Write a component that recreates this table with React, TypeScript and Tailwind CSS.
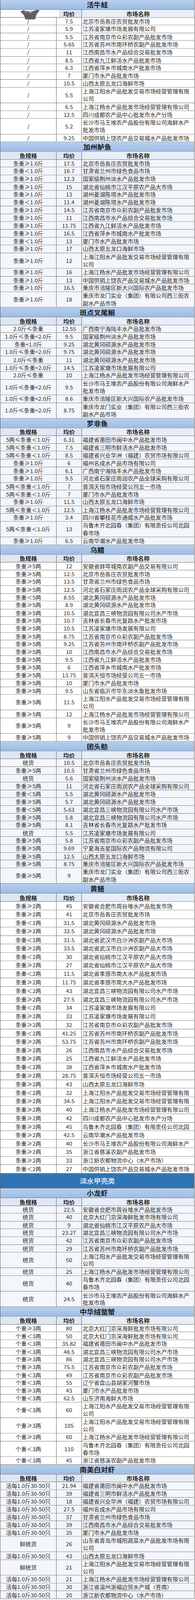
// Wholesale price tables for freshwater fish / crustaceans, one section per species.
import { useEffect, useState } from "react";

type R = [string, string, string];

type Section = {
  title: string;
  tint?: boolean;
  tall?: boolean;
  rows: R[];
};

const GE1 = "条重≥1.0斤";
const LT1 = "条重＜1.0斤";
const A = "1.0斤≤条重<2.0斤";
const B = "2.0斤≤条重";
const C = "条重<1.0斤";
const L5 = "5两≤条重＜1.0斤";
const GE5 = "条重≥5两";
const LT5 = "条重＜5两";
const GE2 = "条重≥2两";
const LT2 = "条重＜2两";
const TH = "统货";
const GE3 = "个重≥3两";
const LT3 = "个重＜3两";
const SH = "活每1.0斤30-50只";

const JY = "上海江阳水产品批发交易市场经营管理有限公司";
const JYS = "上海江杨水产品批发市场经营管理有限公司";
const CS = "长沙市马王堆农产品股份有限公司海鲜水产批发市场";
const SR = "中国供销上饶农产品交易城水产品批发市场";
const LM = "重庆市龙门实业（集团）有限公司西三街农副水产品市场";
const FL = "重庆市涪陵区新大兴国际农产品批发市场";
const WL = "乌鲁木齐北园春（集团）有限责任公司北园春市场";

const sectionsA: Section[] = [
  {
    title: "活牛蛙",
    rows: [
      ["/", "7.5", "北京市岳各庄农贸批发市场"],
      ["/", "5.9", "江苏凌家塘市场发展有限公司"],
      ["/", "5.5", "江苏省南京市众彩农副产品批发市场"],
      ["/", "5.65", "江苏省苏州市南环桥农副产品批发市场"],
      ["/", "11", "江西南昌市水产品综合交易批发市场"],
      ["/", "8.5", "江西省九江鲜活水产品批发市场"],
      ["/", "6.3", "江西省萍乡市城南水产批发市场"],
      ["/", "7", "厦门市水产品批发市场"],
      ["/", "10.5", "山西太原五龙口海鲜市场"],
      ["/", "5.5", JY],
      ["/", "6.5", JYS],
      ["/", "12.5", "四川成都农产品中心批发市水产分场"],
      ["/", "5.2", CS],
      ["/", "9.25", SR],
    ],
  },
  {
    title: "加州鲈鱼",
    tint: true,
    rows: [
      [GE1, "17.5", "北京市岳各庄农贸批发市场"],
      [LT1, "16.7", "甘肃省兰州市绿色食品市场"],
      [GE1, "12.3", "国家级荆州淡水产品批发市场"],
      [GE1, "15", "湖北省仙桃市江汉平原农产品大市场"],
      [GE1, "13", "湖州菱湖陈塔水产品批发市场"],
      [LT1, "11.4", "湖州菱湖陈塔水产品批发市场"],
      [GE1, "14.5", "江苏省南京市众彩农副产品批发市场"],
      [GE1, "11", "江西南昌市水产品综合交易批发市场"],
      [GE1, "11.75", "江西省九江鲜活水产品批发市场"],
      [GE1, "16.5", "江西省萍乡市城南水产批发市场"],
      [LT1, "13", "厦门市水产品批发市场"],
      [GE1, "17", "山西太原五龙口海鲜市场"],
      [GE1, "12", JY],
      [GE1, "16", JYS],
      [GE1, "13", SR],
      [GE1, "16.5", FL],
      [GE1, "18", LM],
    ],
  },
  {
    title: "斑点叉尾鮰",
    tint: true,
    rows: [
      [B, "12.55", "广西南宁海陆丰水产品批发市场"],
      [A, "9.5", "国家级荆州淡水产品批发市场"],
      [C, "9.25", "湖北黄冈硕源水产品批发市场"],
      [A, "9.75", "湖北黄冈硕源水产品批发市场"],
      [B, "11", "湖北黄冈硕源水产品批发市场"],
      [A, "14.5", "江苏凌家塘市场发展有限公司"],
      [B, "10", JYS],
      [A, "9.5", CS],
      [A, "8.6", FL],
      [A, "8.75", LM],
    ],
  },
  {
    title: "罗非鱼",
    tint: true,
    rows: [
      [L5, "6.31", "福建省莆田市闽中水产品批发市场"],
      [L5, "7.5", "福建省三明市鲜活水产品批发市场"],
      [L5, "8.5", "福建省兴业华洲（福建）农贸市场有限公司"],
      [GE1, "6", "福州名成水产品市场有限公司"],
      [GE1, "6.1", "广西南宁海陆丰水产品批发市场"],
      [GE1, "9.5", "河北省石家庄雨润农产品全球采购有限公司"],
      [L5, "7", "普洱天恒市场经营公司五一市场"],
      [L5, "7", "厦门市水产品批发市场"],
      [GE1, "11.5", "山西太原五龙口海鲜市场"],
      [L5, "12.5", JYS],
      [GE1, "3.4", "四川省攀枝花市通威水产品批发市场"],
      [L5, "13", WL],
      [GE1, "6.5", "云南华潮水产品批发市场"],
    ],
  },
  {
    title: "乌鳢",
    rows: [
      [GE5, "12", "安徽省蚌埠城南农副产品交易有限公司"],
      [GE5, "12.5", "北京市岳各庄农贸批发市场"],
      [GE5, "13.5", "甘肃省兰州市绿色食品市场"],
      [GE5, "12.5", "河北省石家庄雨润农产品全球采购有限公司"],
      [LT5, "8.55", "湖北黄冈硕源水产品批发市场"],
      [GE5, "8.9", "湖北黄冈硕源水产品批发市场"],
      [GE5, "10.5", "湖北宜昌三峡物流园有限公司水产市场"],
      [GE5, "10.7", "吉林省长春市光复路水产批发市场"],
      [GE5, "10.5", "江苏凌家塘市场发展有限公司"],
      [GE5, "8.75", "江苏省南京市众彩农副产品批发市场"],
      [GE5, "9.25", "江苏省苏州市南环桥农副产品批发市场"],
      [GE5, "10", "江西南昌市水产品综合交易批发市场"],
      [GE5, "9.5", "江西省九江鲜活水产品批发市场"],
      [GE5, "6", "江西省萍乡市城南水产批发市场"],
      [GE5, "13.75", "普洱天恒市场经营公司五一市场"],
      [GE5, "10", "厦门市水产品批发市场"],
      [GE5, "9.5", "山东省临沂市华东淡水鱼批发市场"],
      [GE5, "11.5", JY],
      [GE5, "12", JYS],
      [GE5, "9", CS],
      [GE5, "9", SR],
    ],
  },
  {
    title: "团头鲂",
    tint: true,
    rows: [
      [TH, "10.5", "北京市岳各庄农贸批发市场"],
      [GE5, "10.5", "甘肃省兰州市绿色食品市场"],
      [TH, "5.6", "国家级荆州淡水产品批发市场"],
      [GE5, "11", "河北省石家庄雨润农产品全球采购有限公司"],
      [LT5, "5.5", "湖北黄冈硕源水产品批发市场"],
      [GE5, "5.7", "湖北黄冈硕源水产品批发市场"],
      [LT5, "5.63", "湖北宜昌三峡物流园有限公司水产市场"],
      [GE5, "5.8", "湖北宜昌三峡物流园有限公司水产市场"],
      [GE5, "8.1", "吉林省长春市光复路水产批发市场"],
      [TH, "5.5", "江苏凌家塘市场发展有限公司"],
      [GE5, "5.8", "江苏省南京市众彩农副产品批发市场"],
      [GE5, "9.69", "宁夏海吉星国际农产品物流有限公司"],
      [GE5, "12.5", "山西太原五龙口海鲜市场"],
      [GE5, "8.75", FL],
      [GE5, "9", LM],
    ],
  },
  {
    title: "黄鳝",
    tall: true,
    rows: [
      [GE2, "45", "安徽省合肥市周谷堆水产品批发市场"],
      [GE2, "41", "北京市岳各庄农贸批发市场"],
      [LT2, "31.5", "湖北黄冈硕源水产品批发市场"],
      [GE2, "32.5", "湖北黄冈硕源水产品批发市场"],
      [LT2, "31.5", "湖北省武汉市白沙洲农副产品大市场"],
      [GE2, "33.5", "湖北省武汉市白沙洲农副产品大市场"],
      [LT2, "30", "湖北省仙桃市江汉平原农产品大市场"],
      [GE2, "27", "湖北省仙桃市江汉平原农产品大市场"],
      [LT2, "11.5", "湖北省孝感市南大水产品批发市场"],
      [GE2, "11.75", "湖北省孝感市南大水产品批发市场"],
      [LT2, "43", "湖北宜昌三峡物流园有限公司水产市场"],
      [GE2, "27.5", "湖北宜昌三峡物流园有限公司水产市场"],
      [LT2, "34", "江苏凌家塘市场发展有限公司"],
      [GE2, "33", "江苏凌家塘市场发展有限公司"],
      [GE2, "32", "江苏省南京市众彩农副产品批发市场"],
      [LT2, "41.25", "江苏省苏州市南环桥农副产品批发市场"],
      [GE2, "53.75", "江苏省苏州市南环桥农副产品批发市场"],
      [GE2, "26", "江西南昌市水产品综合交易批发市场"],
      [GE2, "25", "江西省九江鲜活水产品批发市场"],
      [LT2, "38", "江西省萍乡市城南水产批发市场"],
      [GE2, "28.75", "普洱天恒市场经营公司五一市场"],
      [GE2, "43", "山西太原五龙口海鲜市场"],
      [LT2, "32", "上海江阳水产品批发交易市场经营管理有限"],
      [GE2, "34.5", "上海江阳水产品批发交易市场经营管理有限"],
      [GE2, "40", JYS],
      [GE2, "42", "四川成都农产品中心批发市水产分场"],
      [GE2, "45", "乌鲁木齐北园春（集团）有限责任公司北园"],
      [GE2, "42.5", "云南华潮水产品批发市场"],
      [GE2, "40", "长沙市马王堆农产品股份有限公司海鲜水产"],
      [GE2, "35", "浙江省慈溪农副产品批发市场"],
      [GE2, "33", "浙江新农都物流中心（水产市场）"],
      [LT2, "27", SR],
    ],
  },
];

const sectionsB: Section[] = [
  {
    title: "小龙虾",
    tint: true,
    rows: [
      [TH, "22.5", "安徽省合肥市周谷堆水产品批发市场"],
      [TH, "40", "北京大红门京深海鲜批发市场有限公司"],
      [TH, "9", "湖北省仙桃市江汉平原农产品大市场"],
      [TH, "23.27", "湖北宜昌三峡物流园有限公司水产市场"],
      [TH, "42", "江苏省南京市众彩农副产品批发市场"],
      [TH, "29", "江苏省苏州市南环桥农副产品批发市场"],
      [TH, "50", JY],
      [TH, "25", JYS],
      [TH, "40", WL],
      [TH, "24.5", CS],
    ],
  },
  {
    title: "中华绒螯蟹",
    rows: [
      [GE3, "80", "北京大红门京深海鲜批发市场有限公司"],
      [LT3, "50", "北京大红门京深海鲜批发市场有限公司"],
      [LT3, "35.82", "福建省莆田市闽中水产品批发市场"],
      [LT3, "48.5", "湖北宜昌三峡物流园有限公司水产市场"],
      [GE3, "86", "湖北宜昌三峡物流园有限公司水产市场"],
      [GE3, "75.5", "江苏省南京市众彩农副产品批发市场"],
      [LT3, "49", "江苏省南京市众彩农副产品批发市场"],
      [LT3, "55", "辽宁省盘山县胡家河蟹市场"],
      [GE3, "43", "厦门市水产品批发市场"],
      [LT3, "62.5", "山东济南海鲜大市场"],
      [LT3, "60", JY],
      [GE3, "105", JY],
      [GE3, "60", JYS],
      [LT3, "110", WL],
      [LT3, "45", "浙江省慈溪农副产品批发市场"],
    ],
  },
  {
    title: "南美白对虾",
    tint: true,
    rows: [
      [SH, "21.94", "福建省莆田市闽中水产品批发市场"],
      [SH, "39", "福建省三明市鲜活水产品批发市场"],
      [SH, "18", "福建省兴业华洲（福建）农贸市场有限公司"],
      [SH, "27.5", "福州名成水产品市场有限公司"],
      [SH, "37", "甘肃省兰州市绿色食品市场"],
      [SH, "39", "江西南昌市水产品综合交易批发市场"],
      [SH, "35", "厦门市水产品批发市场"],
      ["鲜统货", "26", "山东省青岛市城阳蔬菜水产品批发市场有限公司"],
      [SH, "43", "山西太原五龙口海鲜市场"],
      ["鲜统货", "21", JY],
      [SH, "21", JYS],
      [SH, "30", "浙江省温州浙福边贸水产城（苍南）"],
      [SH, "20", "浙江新农都物流中心（水产市场）"],
    ],
  },
];

// full height of the table as laid out below
const TABLE_H = 4438;

const line = "border-[#5e5e5e]";

function TitleRow({ title }: { title: string }) {
  return (
    <div
      className={`h-[27px] flex items-center justify-center border-b ${line} bg-linear-to-b from-[#b7cfee] to-[#9dbce4] text-[18px] font-bold text-[#1b1b1b] leading-none`}
    >
      {title}
    </div>
  );
}

function HeaderRow({ tall, logo }: { tall?: boolean; logo?: boolean }) {
  return (
    <div
      className={`relative flex ${tall ? "h-[23.5px]" : "h-[21.6px]"} border-b ${line} bg-[#dfe7f2] text-[15px] font-bold text-[#1b1b1b] leading-none`}
    >
      <div className={`w-[144px] shrink-0 border-r ${line} flex items-center justify-center`}>鱼规格</div>
      <div className={`w-[65px] shrink-0 border-r ${line} flex items-center justify-center`}>均价</div>
      <div className="flex-1 flex items-center justify-center bg-[#e7eef7]">市场名称</div>
      {logo && (
        <div className="absolute left-[2px] top-0 w-[148px] h-[20px] bg-white/95 flex items-start justify-center">
          <svg width="52" height="27" viewBox="0 0 52 27">
            <path d="M1 6 L9 1 Q26 9 43 0 L51 2 Q41 11 39 27 L14 27 Q12 12 1 6 Z" fill="#5f5f5f" />
            <path d="M9 1 Q16 4 20 5 L14 9 Z" fill="#8a8a8a" />
            <path d="M24 5 L24 9 M27 4 L27 9 M30 5 L30 9" stroke="#f2f2f2" strokeWidth="1.2" />
          </svg>
        </div>
      )}
    </div>
  );
}

function DataRow({ r, tint, tall }: { r: R; tint?: boolean; tall?: boolean }) {
  const [spec, price, market] = r;
  const two = [...market].length > 19;
  const h = tall ? "h-[23.56px]" : two ? "h-[43.2px]" : "h-[21.6px]";
  return (
    <div className={`flex ${h} border-b ${line} ${tint ? "bg-[#f3f6fb]" : "bg-white"} text-[14.4px] text-[#262626] leading-none`}>
      <div className={`w-[144px] shrink-0 border-r ${line} flex items-center justify-center whitespace-nowrap`}>
        {spec}
      </div>
      <div className={`w-[65px] shrink-0 border-r ${line} flex items-center justify-center`}>
        {price}
      </div>
      <div className="flex-1 min-w-0 flex items-center pl-[2px] pr-[2px]">
        {two ? (
          <div className="leading-[20.6px] break-all">{market}</div>
        ) : (
          <div className="whitespace-nowrap">{market}</div>
        )}
      </div>
    </div>
  );
}

function Block({ s, logo }: { s: Section; logo?: boolean }) {
  return (
    <div>
      <TitleRow title={s.title} />
      <HeaderRow tall={s.tall} logo={logo} />
      {s.rows.map((r, i) => (
        <DataRow key={i} r={r} tint={s.tint} tall={s.tall} />
      ))}
    </div>
  );
}

export default function App() {
  // the browser window can be shorter than the table; squeeze it vertically to fit
  const [fit, setFit] = useState(1);
  useEffect(() => {
    setFit(Math.min(1, window.innerHeight / TABLE_H));
  }, []);

  return (
    <div className="w-[500px] h-screen overflow-hidden bg-white">
      <div
        className="w-[500px] origin-top bg-white"
        style={{ fontFamily: '"Noto Sans CJK SC", "Noto Sans", sans-serif', transform: `scaleY(${fit})` }}
      >
        <div className={`w-[499px] border-l border-r ${line}`}>
          {sectionsA.map((s, i) => (
            <Block key={s.title} s={s} logo={i === 0} />
          ))}
          <div
            className={`h-[41px] flex items-center justify-center border-b ${line} bg-[#2f74b5] text-[18px] font-bold text-[#d6e5f5] leading-none`}
          >
            淡水甲壳类
          </div>
          {sectionsB.map((s) => (
            <Block key={s.title} s={s} />
          ))}
        </div>
      </div>
    </div>
  );
}
